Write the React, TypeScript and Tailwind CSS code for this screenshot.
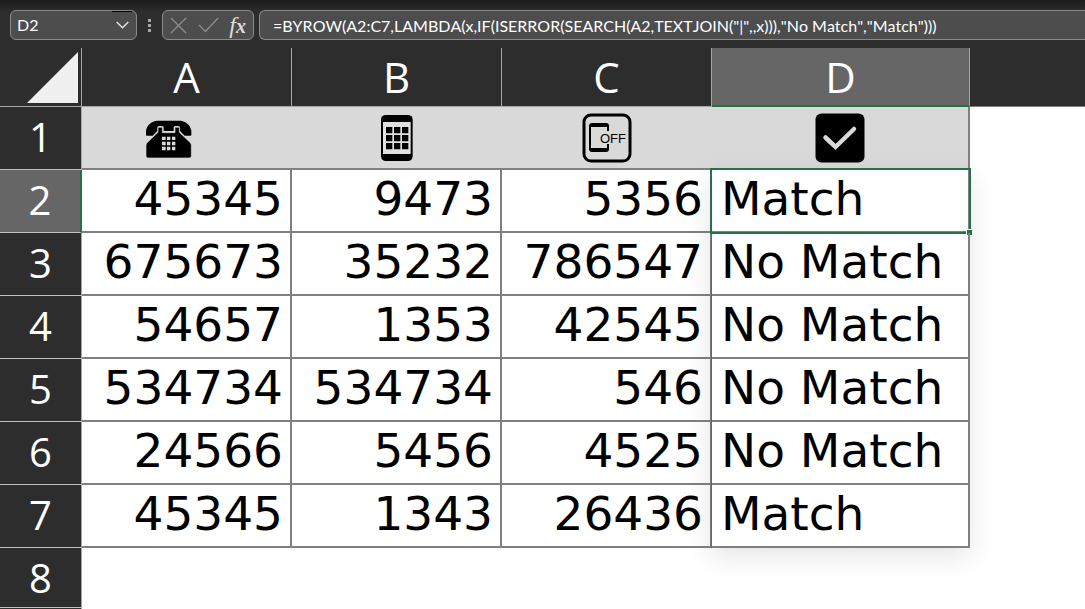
import React, { useState } from "react";

const FORMULA = '=BYROW(A2:C7,LAMBDA(x,IF(ISERROR(SEARCH(A2,TEXTJOIN("|",,x))),"No Match","Match")))';

const rows = [
  ["45345", "9473", "5356", "Match"],
  ["675673", "35232", "786547", "No Match"],
  ["54657", "1353", "42545", "No Match"],
  ["534734", "534734", "546", "No Match"],
  ["24566", "5456", "4525", "No Match"],
  ["45345", "1343", "26436", "Match"],
];

export default function App() {
  const [cell, setCell] = useState("D2");
  const [formula, setFormula] = useState(FORMULA);

  return (
    <div className="min-h-screen overflow-hidden bg-white">
      {/* Formula bar */}
      <div className="flex h-12 items-start bg-[#2d2d2d] bg-linear-to-b from-[#1c1c1c] to-[#2d2d2d] to-25% pt-2.5 pl-2.5 font-[Lato,sans-serif] text-[16px] text-white">
        <div className="relative flex h-[30px] w-[127px] shrink-0 items-center rounded-md border border-[#8a8a8a] bg-[#4d4d4d]">
          <input aria-label="Name box" value={cell} onChange={(e) => setCell(e.target.value)} className="w-full min-w-0 bg-transparent pl-1.5 outline-none" />
          <button aria-label="Open name list" className="flex h-full w-6 shrink-0 items-center justify-center pr-1">
            <svg width="13" height="8" viewBox="0 0 13 8" fill="none" stroke="#e4e4e4" strokeWidth="1.4"><path d="M.7 1 6.5 6.8 12.3 1" /></svg>
          </button>
          <span className="absolute top-0 right-1 h-px w-5 bg-black" />
        </div>
        <svg className="mx-[10px] mt-2 shrink-0" width="5" height="14" viewBox="0 0 5 14" fill="#a8a8a8"><path d="M1 1h3v3H1zM1 6h3v3H1zM1 11h3v3H1z" /></svg>
        <div className="flex h-[30px] w-[92px] shrink-0 items-center justify-between rounded-md border border-[#8a8a8a] bg-[#4d4d4d] px-[7px]">
          <button aria-label="Cancel">
            <svg width="17" height="17" viewBox="0 0 17 17" fill="none" stroke="#8c8c8c" strokeWidth="1.4"><path d="m1 1 15 15M16 1 1 16" /></svg>
          </button>
          <button aria-label="Enter">
            <svg width="21" height="16" viewBox="0 0 21 16" fill="none" stroke="#8c8c8c" strokeWidth="1.4"><path d="m1 8 6.5 6.5L20 1" /></svg>
          </button>
          <button aria-label="Insert function" className="font-['Liberation_Serif',serif] text-[24px] leading-6 text-[#dcdcdc] italic">
            f<span className="text-[20px] font-bold">x</span>
          </button>
        </div>
        <input
          aria-label="Formula"
          value={formula}
          onChange={(e) => setFormula(e.target.value)}
          className="ml-[5px] h-[30px] min-w-0 flex-1 rounded-l-md border border-r-0 border-[#8a8a8a] bg-[#4d4d4d] pl-[13px] outline-none [font-kerning:none]"
        />
      </div>

      <table className="w-full table-fixed border-separate border-spacing-0">
        <colgroup>
          <col className="w-[82px]" />
          <col className="w-[210px]" />
          <col className="w-[210px]" />
          <col className="w-[210px]" />
          <col className="w-[258px]" />
          <col />
        </colgroup>
        <thead className="bg-[#2d2d2d] font-['Open_Sans',sans-serif] text-[42px] leading-[56px] text-white">
          <tr className="h-[59px]">
            <th className="border-r border-b border-[#a6a6a6] p-0 align-top">
              <button aria-label="Select all" className="flex w-full justify-end pt-1 pr-[3px]">
                <svg width="51" height="51" viewBox="0 0 51 51" fill="#f0f0f0"><path d="M51 0v51H0z" /></svg>
              </button>
            </th>
            {["A", "B", "C"].map((c) => (
              <th key={c} scope="col" className="border-r border-b border-[#a6a6a6] p-0 pt-px align-top font-normal">{c}</th>
            ))}
            <th scope="col" className="border-r border-b-2 border-r-[#a6a6a6] border-b-[#217346] bg-[#666666] p-0 pt-px align-top font-normal">D</th>
            <td className="border-b border-[#808080]" />
          </tr>
        </thead>
        <tbody className="font-['DejaVu_Sans',sans-serif] text-[47px] leading-[58px] text-black">
          <tr className="h-[63px]">
            <RowHeader n={1} />
            <IconCell><span className="pr-9"><Telephone /></span></IconCell>
            <IconCell><Mobile /></IconCell>
            <IconCell><MobileOff /></IconCell>
            <IconCell last><CheckBox /></IconCell>
            <td />
          </tr>
          {rows.map((row, i) => (
            <tr key={i} className="h-[63px]">
              <RowHeader n={i + 2} active={i === 0} />
              {row.slice(0, 3).map((v, j) => (
                <td key={j} className="border-r-2 border-b-2 border-[#808080] p-0 pr-[7px] text-right align-top">{v}</td>
              ))}
              <td className="relative border-r-2 border-b-2 border-[#808080] p-0 pl-[9px] align-top whitespace-nowrap">
                {row[3]}
                {i === 0 && <Selection />}
              </td>
              <td />
            </tr>
          ))}
          <tr className="h-[60px]">
            <RowHeader n={8} />
            <td colSpan={5} />
          </tr>
          <tr className="h-4">
            <th className="border-r border-[#a6a6a6] bg-[#2d2d2d] p-0" />
            <td colSpan={5} />
          </tr>
        </tbody>
      </table>
    </div>
  );
}

function RowHeader({ n, active }: { n: number; active?: boolean }) {
  return (
    <th
      scope="row"
      className={`border-b border-b-[#c0c0c0] p-0 align-top font-['Open_Sans',sans-serif] text-[40px] leading-[59px] font-normal text-white ${
        active ? "border-r-2 border-r-[#217346] bg-[#666666]" : "border-r border-r-[#a6a6a6] bg-[#2d2d2d]"
      }`}
    >
      {n}
    </th>
  );
}

function IconCell({ last, children }: { last?: boolean; children: React.ReactNode }) {
  return (
    <td className={`border-b-2 border-[#808080] bg-[#d9d9d9] p-0 ${last ? "border-r-2" : ""}`}>
      <div className="flex items-center justify-center">{children}</div>
    </td>
  );
}

// Active cell frame, fill handle and the shadow of the spilled range
function Selection() {
  return (
    <>
      <div className="pointer-events-none absolute top-0 -right-0.5 -left-px h-[378px] border border-t-0 border-[#666666] shadow-[0_8px_26px_rgba(0,0,0,0.11)]" />
      <div className="pointer-events-none absolute -top-0.5 -right-[3px] -bottom-[3px] -left-0.5 border-2 border-[#217346]" />
      <div className="absolute -right-1 -bottom-1 size-[6px] border-t border-l border-white bg-[#217346]" />
    </>
  );
}

function Telephone() {
  return (
    <svg className="mt-1" width="48" height="39" viewBox="45 52 144 117">
      <path d="M48 96V84c3-16 14-27 32-30h72c18 3 29 14 32 30v12q0 3-3 3h-17l-14-14v-10q0-5-5-5h-9q-5 0-5 5v10h-30v-10q0-5-5-5h-9q-5 0-5 5v10L68 99H51q-3 0-3-3z" />
      <path d="M86 74h9q2 0 2 3v13h38V77q0-3 2-3h9q2 0 2 3v12l33 31q3 4 3 8v32q0 6-6 6H54q-6 0-6-6v-32q0-4 3-8l33-31V77q0-3 2-3z" stroke="#d9d9d9" strokeWidth="2" />
      <path fill="#d9d9d9" d="M96 102h11v10H96zm15 0h10v10h-10zm15 0h10v10h-10zm-30 15h11v11H96zm15 0h10v11h-10zm15 0h10v11h-10zm-30 15h11v11H96zm15 0h10v11h-10zm15 0h10v11h-10z" />
    </svg>
  );
}

function Mobile() {
  return (
    <svg width="32" height="46" viewBox="60 29 96 138">
      <rect x="60" y="29" width="95" height="138" rx="14" />
      <path fill="#e0e0e0" d="M66 50h83v96H66z" />
      <path d="M75 65h19v19H75zm24 0h19v19H99zm24 0h19v19h-19zM75 89h19v19H75zm24 0h19v19H99zm24 0h19v19h-19zM75 113h19v19H75zm24 0h19v19H99zm24 0h19v19h-19z" />
    </svg>
  );
}

function MobileOff() {
  return (
    <svg width="50" height="50" viewBox="0 0 50 50">
      <rect x="2" y="2" width="46" height="46" rx="7" fill="none" stroke="#000" strokeWidth="3" />
      <path d="M7 13q0-3 3-3h14q3 0 3 3v5h-2v-4H9v21h16v-4h2v5q0 3-3 3H10q-3 0-3-3z" />
      <text x="18" y="30" fontFamily="Liberation Sans, sans-serif" fontSize="13" fill="#000">OFF</text>
    </svg>
  );
}

function CheckBox() {
  return (
    <svg width="50" height="50" viewBox="0 0 50 50">
      <rect x=".5" y=".5" width="49" height="49" rx="6" />
      <path d="m10.500 24.500 10 9.500L39 16" fill="none" stroke="#d9d9d9" strokeWidth="4.500" strokeLinecap="round" />
    </svg>
  );
}
